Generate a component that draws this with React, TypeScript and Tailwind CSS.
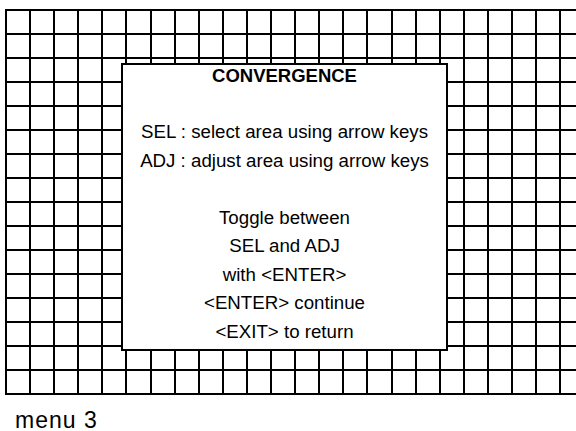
const cells = Array.from({ length: 24 * 16 }, (_, i) => i);

export default function App() {
  return (
    <div
      className="w-[576px] h-[431px] bg-white overflow-hidden text-black"
      style={{ fontFamily: '"Liberation Sans", Arial, sans-serif' }}
    >
      <div className="pt-[9px] pl-[5px]">
        <div className="relative w-[571px] h-[386px] overflow-hidden">
          <div className="grid grid-cols-[repeat(24,24.1px)] grid-rows-[repeat(16,24px)] border-b-2 border-black w-[578px]">
            {cells.map((i) => (
              <div key={i} className="border-l-2 border-t-2 border-black" />
            ))}
          </div>
          <div className="absolute left-[116px] top-[54px] w-[327px] h-[288px] border-2 border-black bg-white flex flex-col items-center text-center">
            <div className="mt-[1px] text-[18.5px] leading-[20px] font-bold">CONVERGENCE</div>
            <div className="mt-[32px] flex flex-col items-center text-[18.7px] leading-[28.5px]">
              <div>SEL : select area using arrow keys</div>
              <div>ADJ : adjust area using arrow keys</div>
              <div className="h-[28.5px]" />
              <div>Toggle between</div>
              <div>SEL and ADJ</div>
              <div>with &lt;ENTER&gt;</div>
              <div>&lt;ENTER&gt; continue</div>
              <div>&lt;EXIT&gt; to return</div>
            </div>
          </div>
        </div>
      </div>
      <div className="mt-[15px] pl-[15px] text-[23px] leading-[20px] tracking-[1px]">menu 3</div>
    </div>
  );
}
